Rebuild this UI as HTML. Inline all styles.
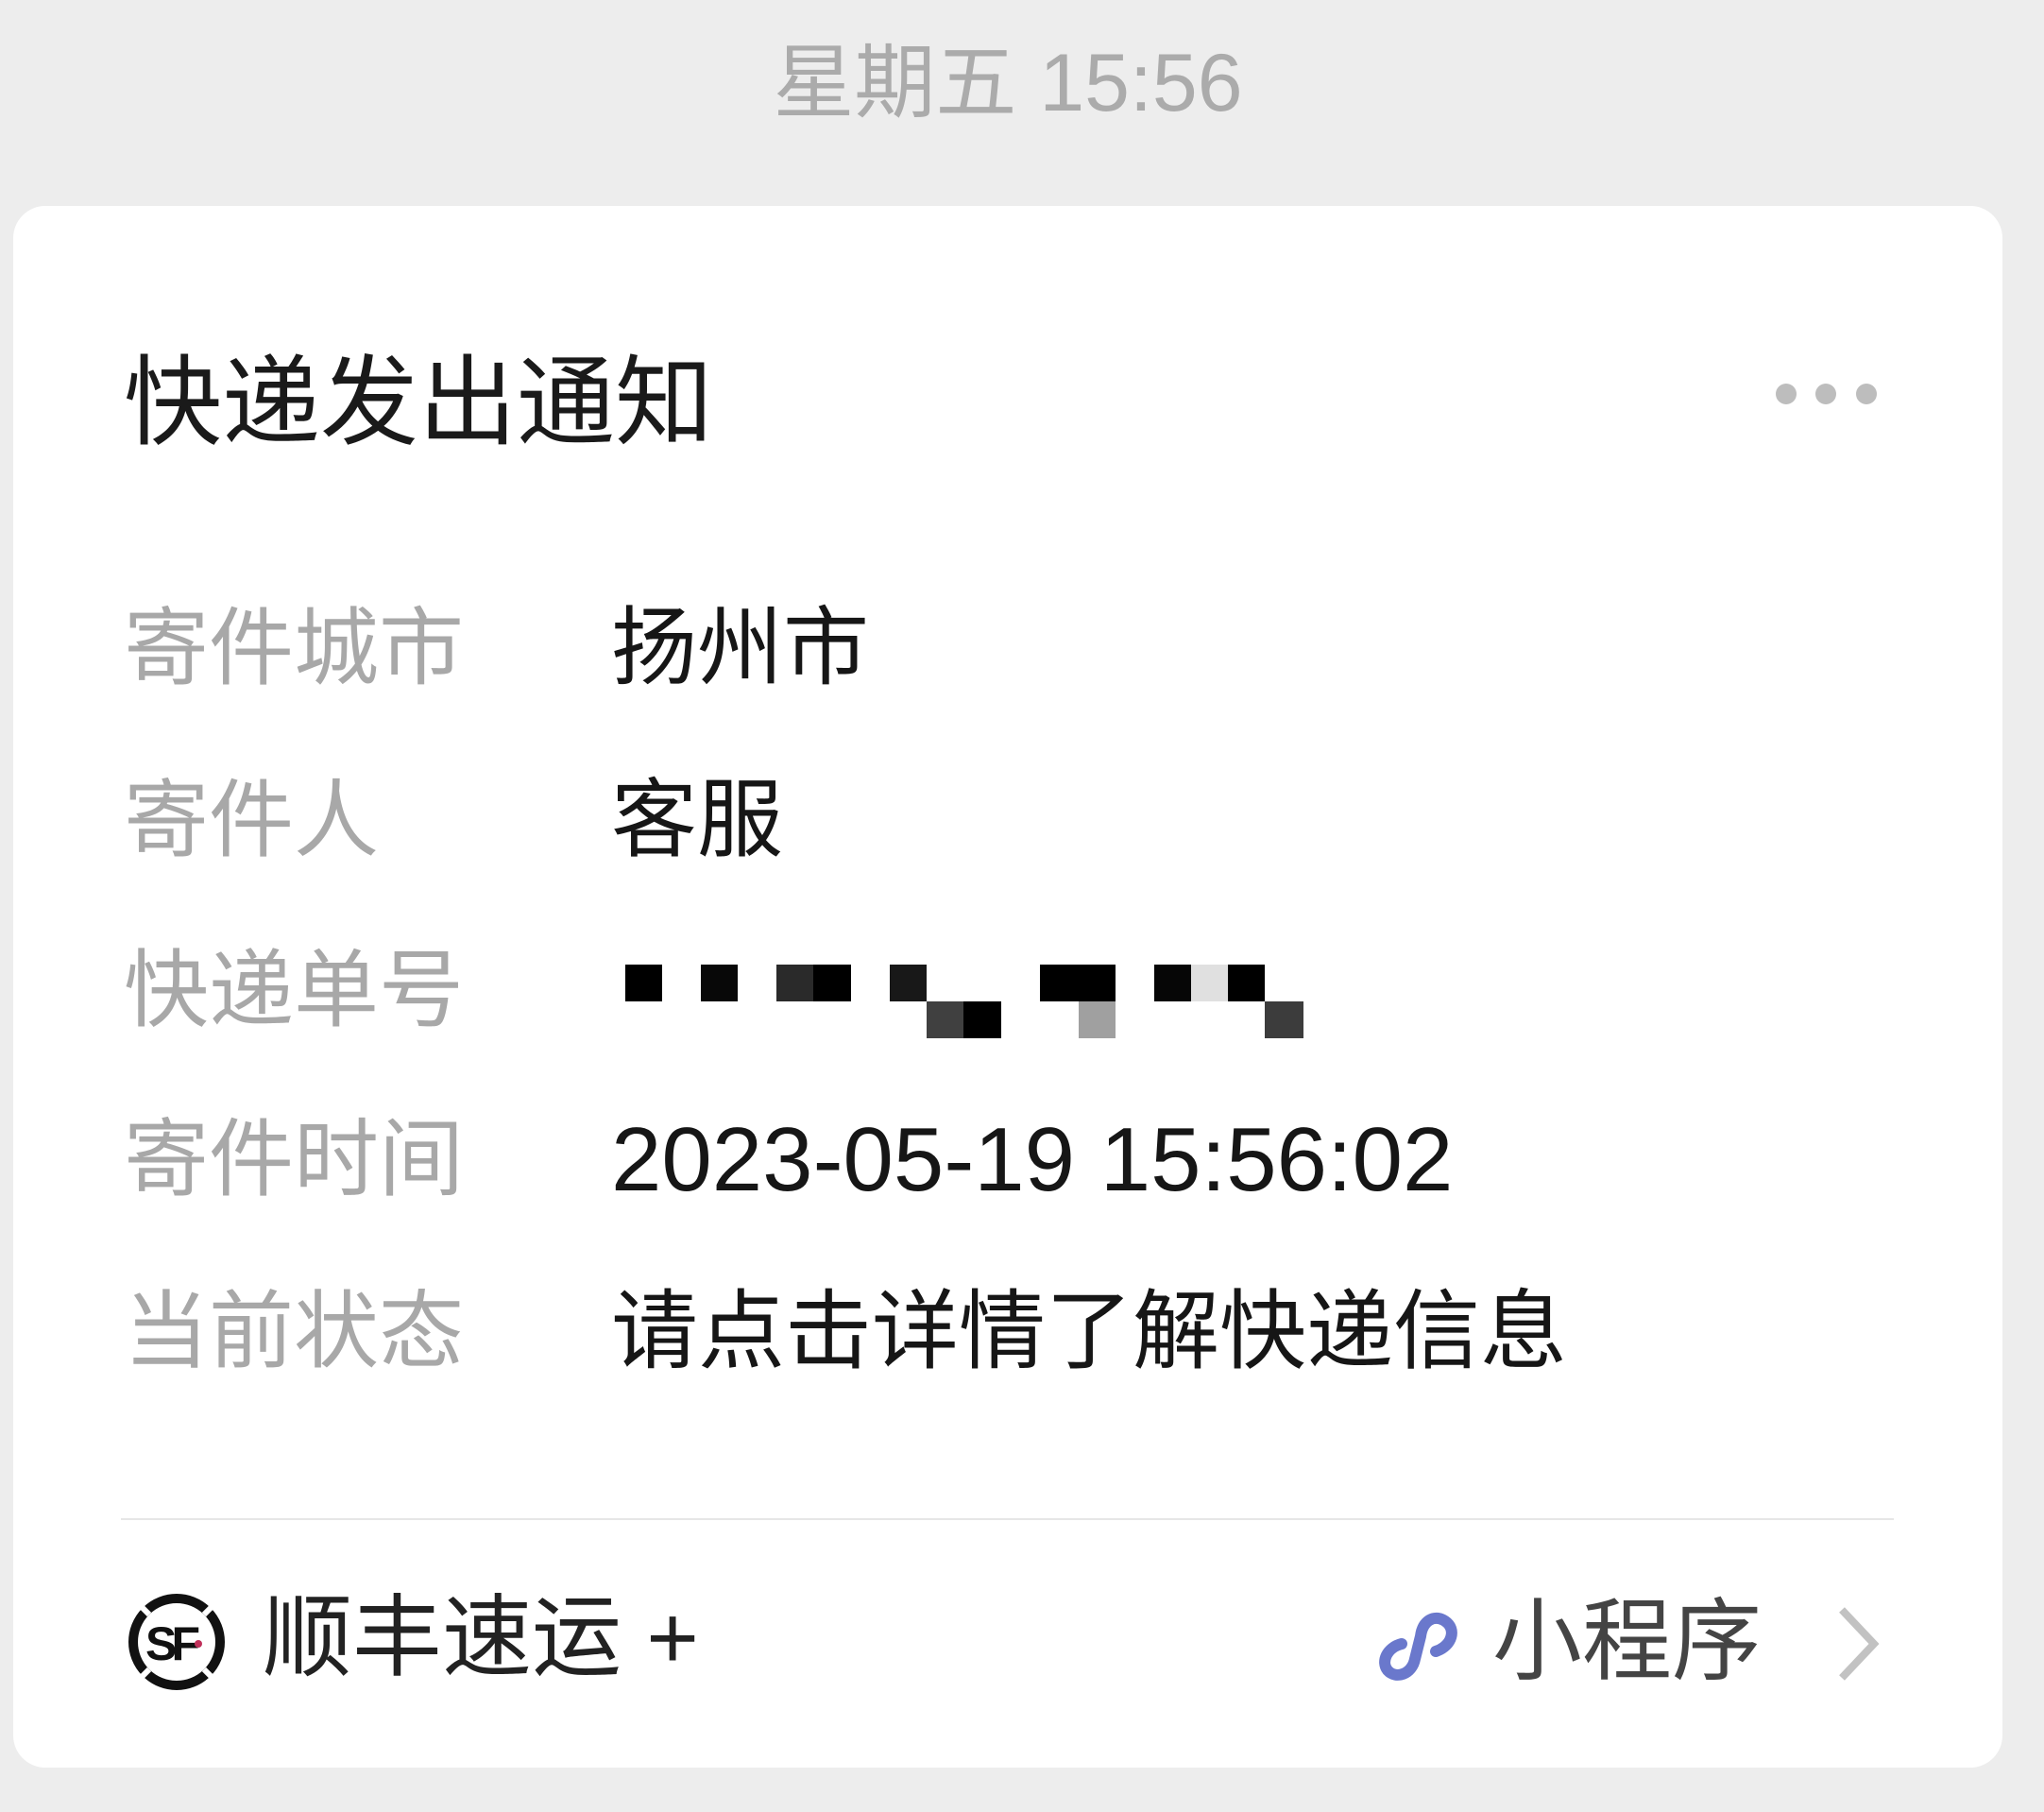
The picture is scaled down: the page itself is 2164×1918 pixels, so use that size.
<!DOCTYPE html>
<html><head><meta charset="utf-8"><style>
html,body{margin:0;padding:0;width:2164px;height:1918px;background:#ededed;overflow:hidden;font-family:"Liberation Sans","Noto Sans CJK SC",sans-serif;}
.time{position:absolute;top:38px;left:0;width:2134px;text-align:center;font-size:86px;color:#ababab;line-height:100px;}
.card{position:absolute;left:14px;top:218px;width:2106px;height:1653px;background:#fff;border-radius:34px;}
.title{position:absolute;left:131px;top:370px;font-size:104px;line-height:114px;color:#1a1a1a;}
.dot{position:absolute;top:406px;width:22px;height:22px;border-radius:50%;background:#bdbdbd;}
.lab{position:absolute;left:131px;font-size:90px;line-height:100px;color:#a8a8a8;}
.val{position:absolute;left:647px;font-size:91px;line-height:100px;color:#161616;}
.px{position:absolute;height:39px;}
.div{position:absolute;left:128px;top:1607px;width:1877px;height:2px;background:#e6e6e6;}
.foot{position:absolute;font-size:95px;line-height:100px;}
</style></head><body>
<div class="time">星期五 15:56</div>
<div class="card"></div>
<div class="title">快递发出通知</div>
<div class="dot" style="left:1880px"></div>
<div class="dot" style="left:1922px"></div>
<div class="dot" style="left:1965px"></div>

<div class="lab" style="top:637px">寄件城市</div><div class="val" style="top:637px">扬州市</div>
<div class="lab" style="top:819px">寄件人</div><div class="val" style="top:819px">客服</div>
<div class="lab" style="top:999px">快递单号</div>
<div class="lab" style="top:1178px">寄件时间</div><div class="val" style="top:1178px;font-size:96px">2023-05-19 15:56:02</div>
<div class="lab" style="top:1360px">当前状态</div><div class="val" style="top:1360px;font-size:92px">请点击详情了解快递信息</div>

<div class="px" style="left:662px;top:1021px;width:39px;background:#000"></div>
<div class="px" style="left:742px;top:1021px;width:39px;background:#080808"></div>
<div class="px" style="left:822px;top:1021px;width:39px;background:#2a2a2a"></div>
<div class="px" style="left:861px;top:1021px;width:40px;background:#000"></div>
<div class="px" style="left:942px;top:1021px;width:39px;background:#181818"></div>
<div class="px" style="left:981px;top:1060px;width:39px;background:#404040"></div>
<div class="px" style="left:1020px;top:1060px;width:40px;background:#000"></div>
<div class="px" style="left:1101px;top:1021px;width:80px;background:#000"></div>
<div class="px" style="left:1142px;top:1060px;width:39px;background:#a0a0a0"></div>
<div class="px" style="left:1222px;top:1021px;width:39px;background:#060606"></div>
<div class="px" style="left:1261px;top:1021px;width:39px;background:#e0e0e0"></div>
<div class="px" style="left:1300px;top:1021px;width:39px;background:#000"></div>
<div class="px" style="left:1339px;top:1060px;width:41px;background:#3c3c3c"></div>

<div class="div"></div>

<svg style="position:absolute;left:134px;top:1685px" width="106" height="106" viewBox="0 0 106 106">
<circle cx="53" cy="53" r="46" fill="none" stroke="#111" stroke-width="10"/>
<g stroke="#fff" stroke-width="6"><line x1="10" y1="10" x2="24" y2="24"/><line x1="96" y1="10" x2="82" y2="24"/><line x1="10" y1="96" x2="24" y2="82"/><line x1="96" y1="96" x2="82" y2="82"/></g>
<text x="20" y="72" font-family="Liberation Sans,sans-serif" font-weight="bold" font-size="50" fill="#111" textLength="58">SF</text>
<circle cx="76" cy="55" r="4" fill="#c0305a"/>
</svg>
<div class="foot" style="left:278px;top:1684px;color:#222">顺丰速运 +</div>

<svg style="position:absolute;left:1456px;top:1698px" width="92" height="86" viewBox="0 0 92 86">
<path d="M64 50 C82 44 86 26 74 18 C62 10 50 18 48 34 L42 58 C39 74 22 80 13 70 C6 61 12 46 28 42" fill="none" stroke="#6a78cc" stroke-width="12" stroke-linecap="round"/>
</svg>
<div class="foot" style="left:1580px;top:1688px;color:#444">小程序</div>
<svg style="position:absolute;left:1940px;top:1698px" width="56" height="86" viewBox="0 0 56 86">
<polyline points="10,6 44,42 10,78" fill="none" stroke="#c2c2c2" stroke-width="8"/>
</svg>
</body></html>
